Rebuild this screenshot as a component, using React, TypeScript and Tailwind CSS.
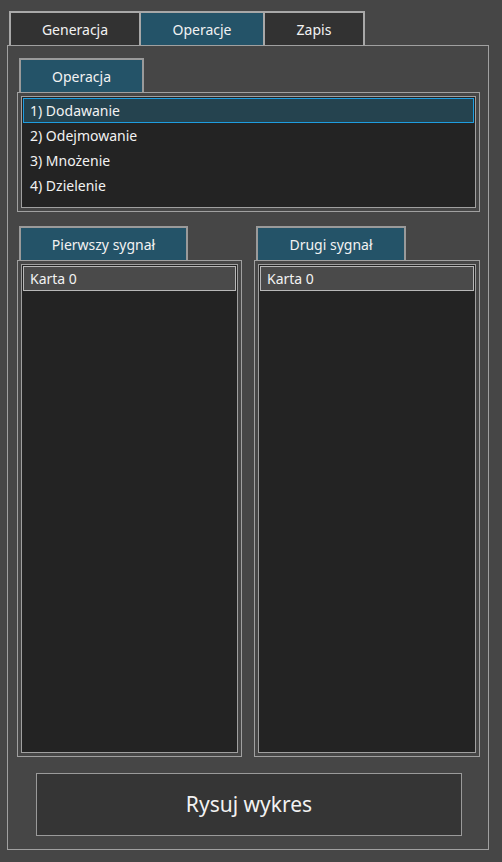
import React from 'react';

const font = { fontFamily: '"Noto Sans", "Liberation Sans", sans-serif' };

const operations = ['1) Dodawanie', '2) Odejmowanie', '3) Mnożenie', '4) Dzielenie'];

const GroupTab: React.FC<{ label: string; width: string }> = ({ label, width }) => (
  <div
    className={`ml-[2px] h-[34px] ${width} bg-[#245368] border-2 border-b-0 border-[#9a9a9a] flex items-center justify-center text-[14px] text-[#f2f2f2]`}
  >
    {label}
  </div>
);

const SignalColumn: React.FC<{ label: string; tabWidth: string; width: string }> = ({ label, tabWidth, width }) => (
  <div className={`flex flex-col ${width}`}>
    <GroupTab label={label} width={tabWidth} />
    <div className="h-[497px] border border-[#a0a0a0] p-[3px]">
      <div className="h-full border border-[#a0a0a0] bg-[#232323] p-px">
        <div className="h-[25px] border border-[#b8b8b8] bg-[#4a4a4a] flex items-center pl-[6px] text-[14px] text-[#f2f2f2]">
          Karta 0
        </div>
      </div>
    </div>
  </div>
);

export default function App() {
  return (
    <div className="w-[502px] h-[862px] bg-[#464646] pt-[11px] pl-[7px]" style={font}>
      <div className="flex ml-[2px] h-[34px]">
        <div className="w-[130px] bg-[#323232] border-l-2 border-t-2 border-[#a8a8a8] flex items-center justify-center text-[14px] text-[#f2f2f2]">
          Generacja
        </div>
        <div className="w-[124px] bg-[#245368] border-l-2 border-t-2 border-[#a8a8a8] flex items-center justify-center text-[14px] text-[#f2f2f2]">
          Operacje
        </div>
        <div className="w-[102px] bg-[#323232] border-x-2 border-t-2 border-[#a8a8a8] flex items-center justify-center text-[14px] text-[#f2f2f2]">
          Zapis
        </div>
      </div>

      <div className="w-[482px] h-[805px] border border-[#a0a0a0] pl-[9px] pr-[8px] pt-[12px] flex flex-col">
        <GroupTab label="Operacja" width="w-[125px]" />
        <div className="h-[120px] border border-[#a0a0a0] p-[3px]">
          <div className="h-full border border-[#a0a0a0] bg-[#232323] p-px">
            {operations.map((op, i) => (
              <div
                key={op}
                className={`h-[25px] flex items-center pl-[6px] text-[14px] text-[#f2f2f2] border ${
                  i === 0 ? 'border-[#1e9de0] bg-[#25434f]' : 'border-transparent'
                }`}
              >
                {op}
              </div>
            ))}
          </div>
        </div>

        <div className="mt-[14px] flex gap-[12px]">
          <SignalColumn label="Pierwszy sygnał" tabWidth="w-[169px]" width="w-[225px]" />
          <SignalColumn label="Drugi sygnał" tabWidth="w-[150px]" width="w-[226px]" />
        </div>

        <button className="mt-[16px] ml-[19px] w-[426px] h-[63px] bg-[#353535] border border-[#9a9a9a] text-[21px] text-[#f2f2f2]">
          Rysuj wykres
        </button>
      </div>
    </div>
  );
}
